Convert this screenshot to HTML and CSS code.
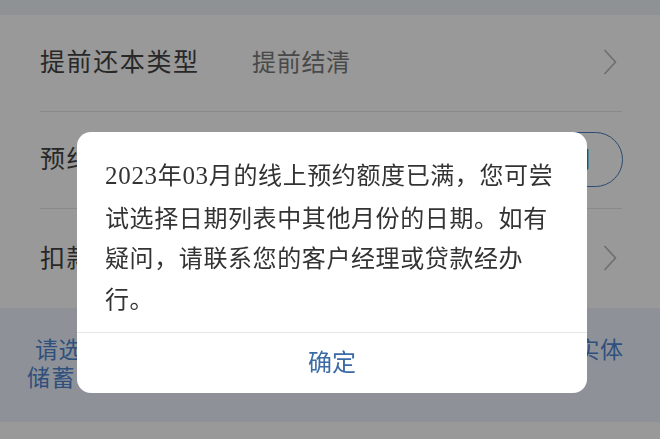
FILE: index.html
```html
<!DOCTYPE html>
<html lang="zh-CN">
<head>
    <meta charset="UTF-8">
    <meta name="viewport" content="width=device-width, initial-scale=1.0">
    <title>提前还款</title>
    <link rel="stylesheet" href="styles.css">
</head>
<body>
    <!-- Repayment form (behind the dialog) -->
    <div class="page">
        <div class="top-band"></div>

        <div class="form-list">
            <div class="form-row">
                <span class="row-label">提前还本类型</span>
                <span class="row-value">提前结清</span>
                <svg class="row-arrow" width="14" height="26" viewBox="0 0 14 26">
                    <polyline points="1.5,1 12.5,13 1.5,25" fill="none" stroke="#b8b8b8" stroke-width="1.6"/>
                </svg>
            </div>
            <div class="form-row">
                <span class="row-label">预约还款日期</span>
                <span class="date-pick">选择日期</span>
            </div>
            <div class="form-row last">
                <span class="row-label">扣款账户</span>
                <svg class="row-arrow" width="14" height="26" viewBox="0 0 14 26">
                    <polyline points="1.5,1 12.5,13 1.5,25" fill="none" stroke="#b8b8b8" stroke-width="1.6"/>
                </svg>
            </div>
        </div>

        <div class="notice">
            <p class="notice-first">请选择您本人名下的借记卡作为扣款账户，需为一类实体</p>
            <p class="notice-second">储蓄卡。</p>
        </div>
    </div>

    <!-- Dialog -->
    <div class="mask"></div>
    <div class="dialog">
        <div class="dialog-body"><span class="num">2023</span>年<span class="num">03</span>月的线上预约额度已满，您可尝<br>试选择日期列表中其他月份的日期。如有<br>疑问，请联系您的客户经理或贷款经办<br>行。</div>
        <div class="dialog-footer">
            <span class="dialog-btn">确定</span>
        </div>
    </div>
</body>
</html>
```

FILE: styles.css
```css
body {
    margin: 0;
    font-family: "Noto Sans CJK SC", sans-serif;
    background: #fff;
    width: 660px;
    height: 439px;
    overflow: hidden;
}

p {
    margin: 0;
}

.top-band {
    height: 15px;
    background: #eef3f8;
}

.form-list {
    padding: 0 38px 0 40px;
}

.form-row {
    box-sizing: border-box;
    height: 97px;
    padding-bottom: 6px;
    display: flex;
    align-items: center;
    border-bottom: 1px solid #e4e4e4;
}

.form-row.last {
    height: 99px;
    border-bottom: none;
}

.row-label {
    width: 212px;
    font-size: 25px;
    letter-spacing: 1.6px;
    color: #444;
}

.row-value {
    font-size: 24px;
    letter-spacing: 0.7px;
    color: #7a7a7a;
}

.row-arrow {
    margin-left: auto;
    margin-right: 5px;
    margin-top: 4px;
}

.date-pick {
    margin-left: auto;
    margin-right: -1px;
    margin-top: 4px;
    height: 55px;
    box-sizing: border-box;
    display: flex;
    align-items: center;
    padding: 0 32px 3px 40px;
    border: 1.5px solid #4a7cc0;
    border-radius: 28px;
    font-size: 24px;
    color: #4a7cc0;
}

.notice {
    height: 114px;
    box-sizing: border-box;
    padding-top: 26px;
    background: #edf4fe;
    font-size: 23px;
    line-height: 28px;
    color: #4f86d0;
}

.notice-first {
    padding: 0 37px 0 35px;
    text-align: justify;
    text-align-last: justify;
}

.notice-second {
    padding-left: 27px;
    letter-spacing: 1.5px;
}

.mask {
    position: fixed;
    top: 0;
    left: 0;
    width: 100%;
    height: 100%;
    background: rgba(0, 0, 0, 0.4);
}

.dialog {
    position: absolute;
    left: 77px;
    top: 132px;
    width: 510px;
    height: 261px;
    background: #fff;
    border-radius: 14px;
    overflow: hidden;
}

.dialog-body {
    padding: 22px 10px 14px 28px;
    font-size: 24px;
    line-height: 40.5px;
    letter-spacing: 0.6px;
    color: #333;
    white-space: nowrap;
}

.num {
    font-family: "Liberation Serif", serif;
    font-size: 25px;
    letter-spacing: 0.7px;
}

.dialog-footer {
    height: 62px;
    border-top: 1px solid #e6e6e6;
    display: flex;
    align-items: center;
    justify-content: center;
}

.dialog-btn {
    font-size: 24px;
    color: #3b6aa5;
    padding-bottom: 7px;
}
```
